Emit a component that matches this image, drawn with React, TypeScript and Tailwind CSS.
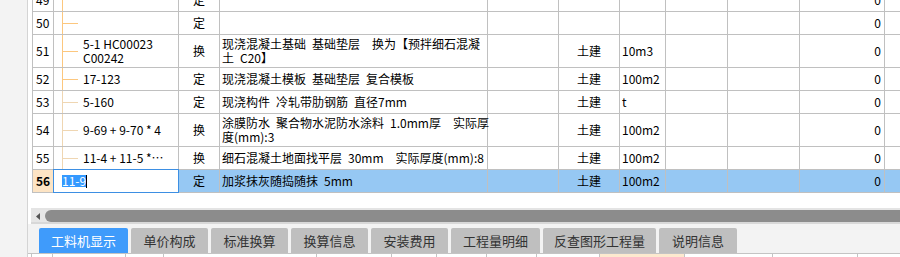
import React from "react";

type Row = {
  num: string;
  tree: string[];
  type: string;
  name: string[];
  spec: string;
  unit: string;
  qty: string;
  tall?: boolean;
  dark?: boolean;
};

// wide gaps as in the reference's bitmap font
const sp = (s: string) => s.replace(/  /g, "\u3000").replace(/ /g, "\u2002");

const rows: Row[] = [
  { num: "49", tree: [], type: "定", name: [], spec: "", unit: "", qty: "0", dark: true },
  { num: "50", tree: [], type: "定", name: [], spec: "", unit: "", qty: "0", dark: true },
  {
    num: "51",
    tree: ["5-1 HC00023", "C00242"],
    type: "换",
    name: ["现浇混凝土基础 基础垫层  换为【预拌细石混凝", "土 C20】"],
    spec: "土建",
    unit: "10m3",
    qty: "0",
    tall: true,
    dark: true,
  },
  { num: "52", tree: ["17-123"], type: "定", name: ["现浇混凝土模板 基础垫层 复合模板"], spec: "土建", unit: "100m2", qty: "0", dark: true },
  { num: "53", tree: ["5-160"], type: "定", name: ["现浇构件 冷轧带肋钢筋 直径7mm"], spec: "土建", unit: "t", qty: "0" },
  {
    num: "54",
    tree: ["9-69 + 9-70 * 4"],
    type: "换",
    name: ["涂膜防水 聚合物水泥防水涂料 1.0mm厚  实际厚", "度(mm):3"],
    spec: "土建",
    unit: "100m2",
    qty: "0",
    tall: true,
  },
  { num: "55", tree: ["11-4 + 11-5 *…"], type: "换", name: ["细石混凝土地面找平层 30mm  实际厚度(mm):8"], spec: "土建", unit: "100m2", qty: "0" },
];

const tabs = [
  { label: "工料机显示", w: "w-[89px]", active: true },
  { label: "单价构成", w: "w-[77px]" },
  { label: "标准换算", w: "w-[77px]" },
  { label: "换算信息", w: "w-[77px]" },
  { label: "安装费用", w: "w-[77px]" },
  { label: "工程量明细", w: "w-[89px]" },
  { label: "反查图形工程量", w: "w-[113px]" },
  { label: "说明信息", w: "w-[78px]" },
];

const cell = "shrink-0 border-r border-[#c0c0c0] flex items-center";

function TreeLines({ dark }: { dark?: boolean }) {
  const c = dark ? "bg-[#fcc77e]" : "bg-[#efd6b2]";
  return (
    <>
      <div className={`absolute left-[8px] top-0 bottom-0 w-px ${c}`} />
      <div className={`absolute left-[8px] top-1/2 w-[16px] h-px ${c}`} />
    </>
  );
}

function GridRow({ r }: { r: Row }) {
  const h = r.tall ? "h-[33px]" : "h-[23px]";
  return (
    <div className={`flex ${h} border-b border-[#c0c0c0]`}>
      <div className={`${cell} w-[22px] border-l pl-[3px]`}>{r.num}</div>
      <div className={`${cell} w-[125px] relative pl-[29px]`}>
        {r.num !== "49" && <TreeLines dark={r.dark} />}
        {r.num === "49" && <div className="absolute left-[8px] top-0 bottom-0 w-px bg-[#fcc77e]" />}
        <div className="flex flex-col leading-[14px] whitespace-pre">
          {r.tree.map((t) => (
            <span key={t}>{t}</span>
          ))}
        </div>
      </div>
      <div className={`${cell} w-[41px] justify-center`}>{r.type}</div>
      <div className={`${cell} w-[268px] pl-[2px]`}>
        <div className="flex flex-col leading-[14px] whitespace-pre">
          {r.name.map((t) => (
            <span key={t}>{sp(t)}</span>
          ))}
        </div>
      </div>
      <div className={`${cell} w-[71px]`} />
      <div className={`${cell} w-[61px] justify-center`}>{r.spec}</div>
      <div className={`${cell} w-[46px] pl-[2px]`}>{r.unit}</div>
      <div className={`${cell} w-[62px]`} />
      <div className={`${cell} w-[72px]`} />
      <div className={`${cell} w-[85px] justify-end pr-[3px]`}>{r.qty}</div>
      <div className="flex-1" />
    </div>
  );
}

function SelectedRow() {
  const b = "bg-[#96c8f3]";
  return (
    <div className="flex h-[23px] border-b border-[#c0c0c0]">
      <div className={`${cell} w-[22px] border-l pl-[3px] bg-[#fde4c4] font-bold`}>56</div>
      <div className={`${cell} w-[125px] relative bg-white`}>
        <div className="absolute -top-px -left-px -right-px -bottom-px border border-[#3d8fe3] flex items-center pl-[8px]">
          <span className="bg-[#3399ff] text-white leading-[12px]">11-9</span>
          <span className="w-px h-[13px] bg-black" />
        </div>
      </div>
      <div className={`${cell} w-[41px] justify-center ${b}`}>定</div>
      <div className={`${cell} w-[268px] pl-[2px] whitespace-pre ${b}`}>{sp("加浆抹灰随捣随抹 5mm")}</div>
      <div className={`${cell} w-[71px] ${b}`} />
      <div className={`${cell} w-[61px] justify-center ${b}`}>土建</div>
      <div className={`${cell} w-[46px] pl-[2px] ${b}`}>100m2</div>
      <div className={`${cell} w-[62px] ${b}`} />
      <div className={`${cell} w-[72px] ${b}`} />
      <div className={`${cell} w-[85px] justify-end pr-[3px] ${b}`}>0</div>
      <div className={`flex-1 ${b}`} />
    </div>
  );
}

const bottomCells = [21, 73, 38, 153, 75, 45, 50, 50, 63, 85, 88, 85];

export default function App() {
  return (
    <div className="flex w-[900px] h-[257px] overflow-hidden bg-white text-black text-[12px] font-['Noto_Sans_CJK_SC',sans-serif]">
      {/* left dock strip */}
      <div className="w-[28px] shrink-0 bg-[#f3f3f3] border-r border-[#d4d4d4]" />

      <div className="flex-1 flex flex-col min-w-0">
        {/* grid */}
        <div className="h-[193px] shrink-0 overflow-hidden pl-[4px] bg-white">
          <div className="-mt-[11px]">
            {rows.map((r) => (
              <GridRow key={r.num} r={r} />
            ))}
            <SelectedRow />
          </div>
        </div>
        <div className="h-[15px] shrink-0 bg-white" />

        {/* horizontal scrollbar */}
        <div className="h-[16px] shrink-0 flex pl-[3px] bg-white">
          <div className="flex-1 flex flex-col">
            <div className="h-[2px] bg-[#e4e4e4]" />
            <div className="flex h-[12px] bg-[#e6e6e6]">
              <div className="w-[14px] flex items-center justify-center">
                <svg width="4" height="7" viewBox="0 0 4 7">
                  <path d="M4 0 L0 3.5 L4 7 Z" fill="#555" />
                </svg>
              </div>
              <div className="flex-1 bg-[#8c8c8c] rounded-l-[6px]" />
            </div>
            <div className="h-[2px] bg-[#d8d8d8]" />
          </div>
        </div>

        {/* tabs */}
        <div className="h-[29px] shrink-0 bg-[#f3f3f3] flex items-end gap-[3px] pl-[11px]">
          {tabs.map((t) => (
            <div
              key={t.label}
              className={`${t.w} h-[25px] shrink-0 rounded-t-[2px] flex items-center justify-center text-[13px] ${
                t.active ? "bg-[#3f9bfb] text-white" : "bg-[#bfbfbf] text-[#333]"
              }`}
            >
              {t.label}
            </div>
          ))}
        </div>

        {/* next grid header peeking */}
        <div className="flex-1 flex border-t border-[#c4c4c4] bg-white pl-[3px]">
          <div className="flex border-l border-[#c4c4c4]">
            {bottomCells.map((w, i) => (
              <div
                key={i}
                style={{ width: w }}
                className={`shrink-0 border-r border-[#c4c4c4] ${i === 9 ? "bg-[#fde9cf]" : ""}`}
              />
            ))}
          </div>
        </div>
      </div>
    </div>
  );
}
